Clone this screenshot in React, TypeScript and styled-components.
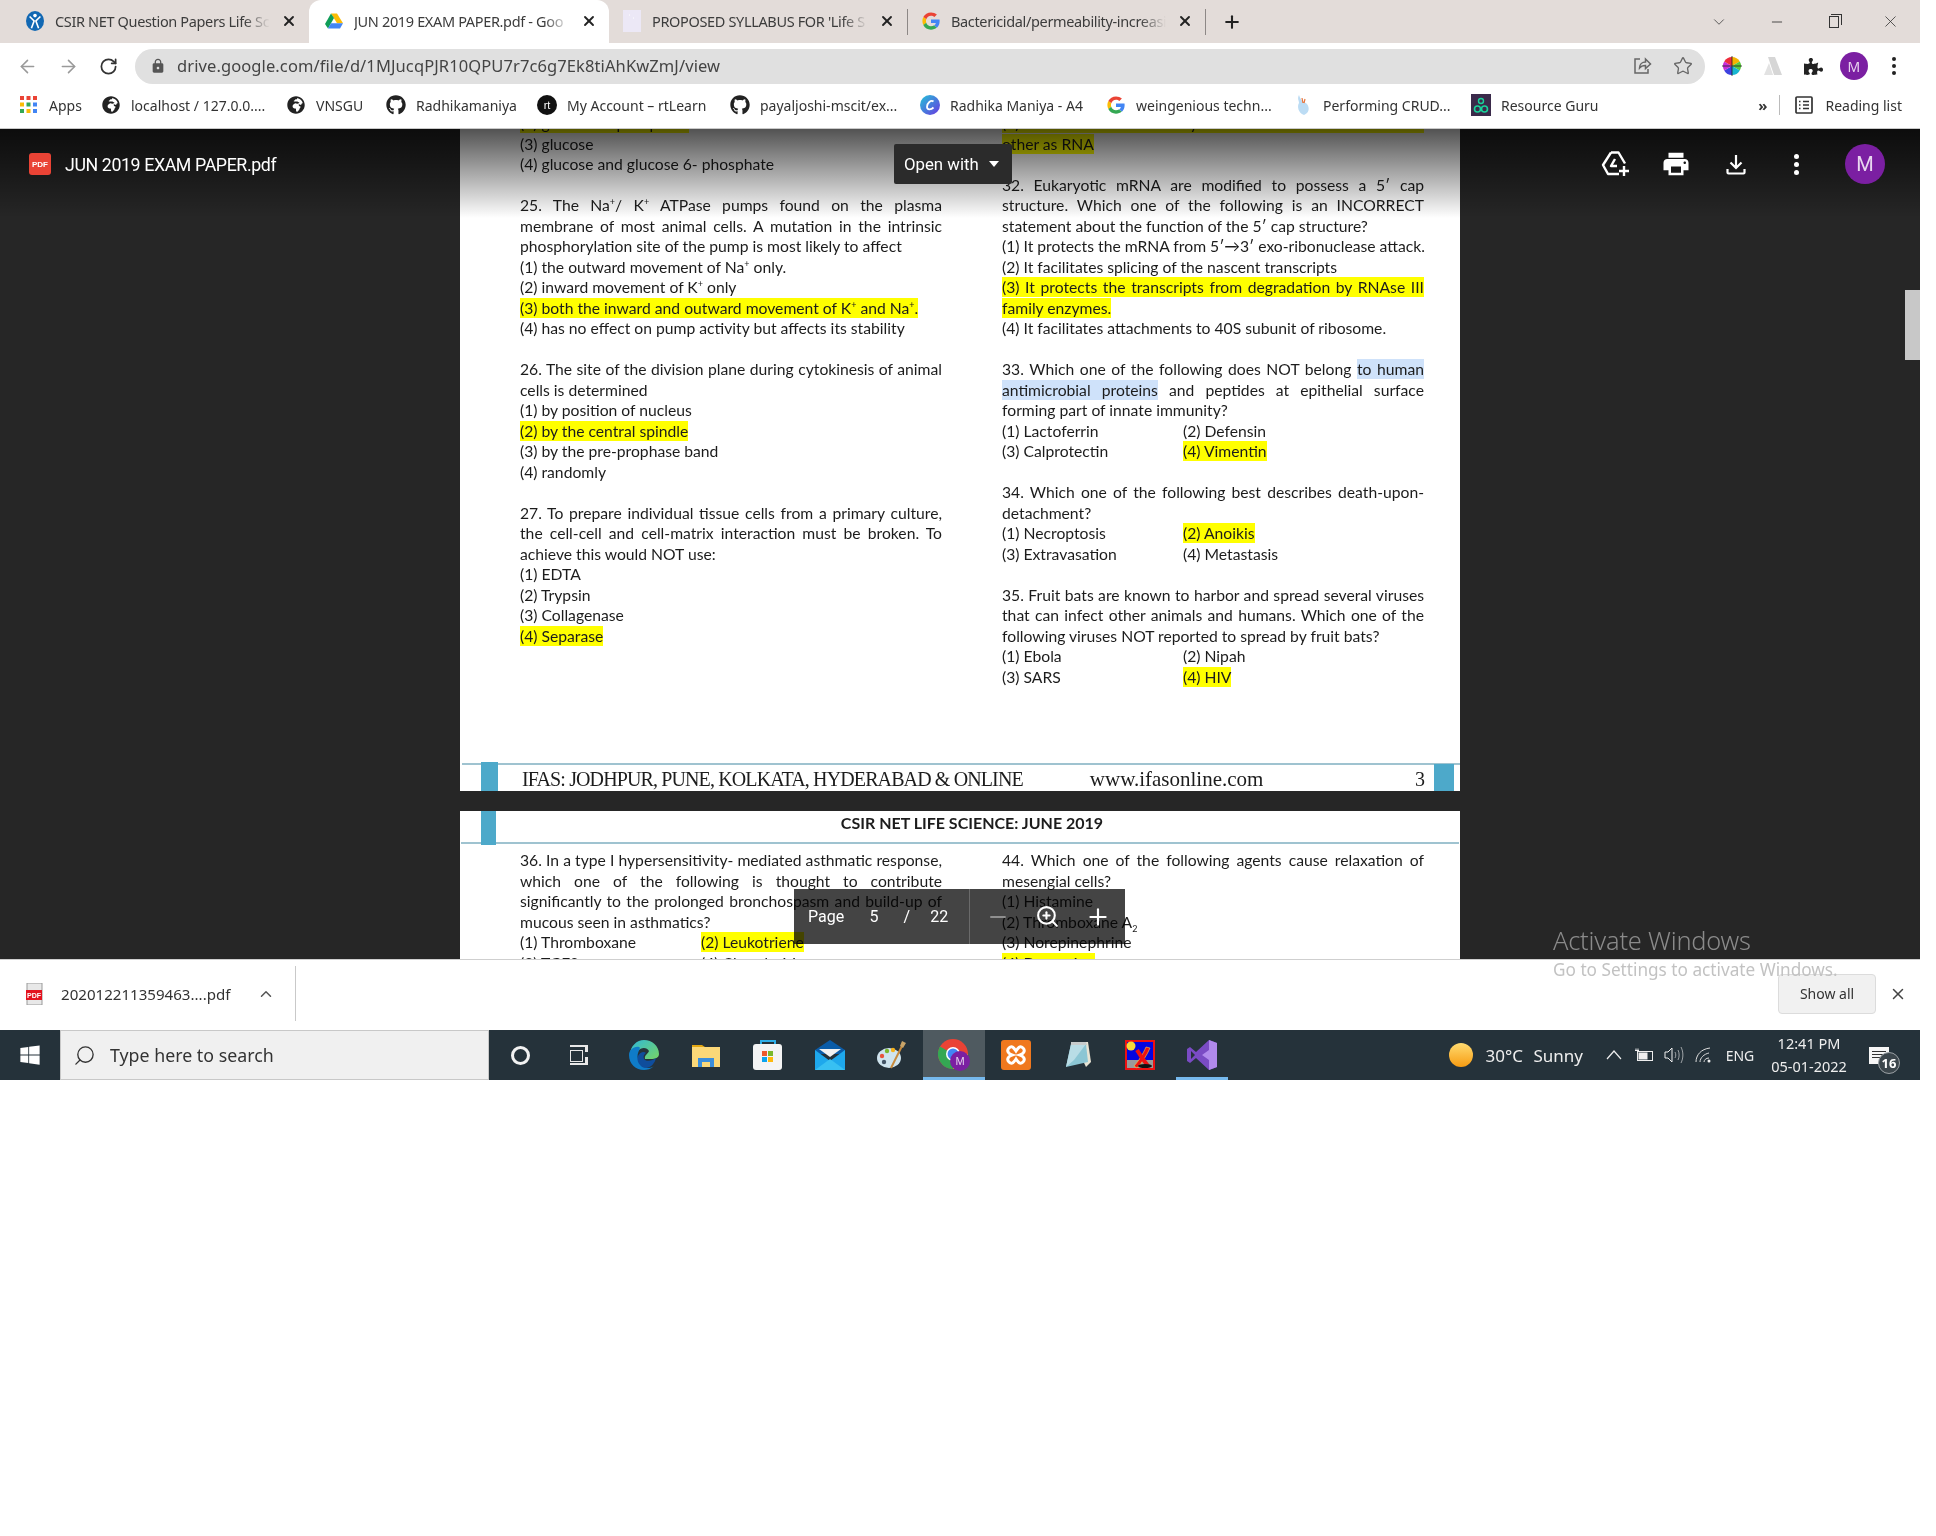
import React from 'react';
import styled, { createGlobalStyle } from 'styled-components';
import { ArrowLeft, ArrowRight, RotateCw, Star, Plus, Minus, X, ChevronDown, ChevronUp, ZoomIn, Search } from 'lucide-react';
import { FaGithub, FaGlobeAfrica, FaPuzzlePiece, FaWindows } from 'react-icons/fa';
import { MdLock, MdPrint } from 'react-icons/md';

const GlobalStyle = createGlobalStyle`
  html, body {
    margin: 0;
    padding: 0;
    background: #fff;
  }
  * {
    box-sizing: border-box;
  }
`;

const UI_FONT = `"Noto Sans", "Open Sans", sans-serif`;
const DOC_FONT = `Lato, "Liberation Sans", sans-serif`;

/* ---------- icons ---------- */

const DriveLogo = ({ size = 18 }: { size?: number }) => (
  <svg width={size} height={size} viewBox="0 0 24 22">
    <path d="M8 1h8l8 13h-8z" fill="#fbbc04" />
    <path d="M8 1 0 15l4 6 8-14z" fill="#0f9d58" />
    <path d="M4 21h16l4-7H8z" fill="#4285f4" />
  </svg>
);

const GoogleG = ({ size = 18 }: { size?: number }) => (
  <svg width={size} height={size} viewBox="0 0 48 48">
    <path fill="#ea4335" d="M24 10c3.5 0 6.6 1.2 9 3.5l6.7-6.7C35.600 3 30.200 1 24 1 15 1 7.300 6.100 3.500 13.600l7.800 6C13.200 14 18.100 10 24 10z" />
    <path fill="#4285f4" d="M47 24.500c0-1.600-.1-3.100-.4-4.500H24v9h13c-.6 3-2.300 5.500-4.800 7.200l7.500 5.800C44.100 37.900 47 31.800 47 24.500z" />
    <path fill="#fbbc05" d="M11.300 28.400c-.5-1.400-.7-2.900-.7-4.400s.3-3 .7-4.400l-7.800-6C1.900 16.800 1 20.300 1 24s.9 7.200 2.500 10.400z" />
    <path fill="#34a853" d="M24 47c6.200 0 11.400-2 15.200-5.500l-7.500-5.800c-2.100 1.400-4.700 2.200-7.700 2.200-5.900 0-10.900-4-12.700-9.400l-7.800 6C7.300 41.900 15 47 24 47z" />
  </svg>
);

const CsirFavicon = () => (
  <svg width="20" height="22" viewBox="0 0 20 22">
    <ellipse cx="10" cy="11" rx="10" ry="11" fill="#1268b3" />
    <circle cx="10" cy="5" r="2" fill="#fff" />
    <path d="M4 6l5 5-3 8M16 6l-5 5 3 8" stroke="#fff" strokeWidth="1.800" fill="none" />
  </svg>
);

const PdfTabFavicon = () => (
  <svg width="18" height="22" viewBox="0 0 18 22">
    <rect width="18" height="22" fill="#ece8f6" />
    <path d="M6 5h1M10 8h1" stroke="#fff" strokeWidth="1" />
  </svg>
);

const AppsGrid = () => (
  <svg width="18" height="18" viewBox="0 0 18 18">
    {['#ea4335', '#ea4335', '#ea4335', '#fbbc04', '#34a853', '#4285f4', '#34a853', '#fbbc04', '#4285f4'].map((c, i) => (
      <rect key={i} x={(i % 3) * 6.500} y={Math.floor(i / 3) * 6.500} width="4" height="4" fill={c} />
    ))}
  </svg>
);

const RtLearnIcon = () => (
  <svg width="20" height="20" viewBox="0 0 20 20">
    <circle cx="10" cy="10" r="10" fill="#111" />
    <text x="10" y="14" fontSize="11" fontFamily="Liberation Sans, sans-serif" fill="#fff" textAnchor="middle">rt</text>
  </svg>
);

const CanvaIcon = () => (
  <svg width="20" height="20" viewBox="0 0 20 20">
    <defs>
      <linearGradient id="canva" x1="0" y1="0" x2="1" y2="1">
        <stop offset="0" stopColor="#22c4d8" />
        <stop offset="1" stopColor="#6a36e0" />
      </linearGradient>
    </defs>
    <circle cx="10" cy="10" r="10" fill="url(#canva)" />
    <path d="M13.500 6.500C11 4.500 7 8 7 12c0 3 4 3 6.500 .5" stroke="#fff" strokeWidth="1.800" fill="none" />
  </svg>
);

const CrudIcon = () => (
  <svg width="18" height="22" viewBox="0 0 18 22">
    <path d="M5 1c-2 4 0 5 0 8-2 3-1 10 5 12 5-2 6-7 3-11-2-2-6-2-8-9z" fill="#bcdcf4" />
    <path d="M8 4l1 5M11 5l-1 4" stroke="#e8743b" strokeWidth="1.200" />
  </svg>
);

const ResourceGuruIcon = () => (
  <svg width="20" height="22" viewBox="0 0 20 22">
    <rect width="20" height="22" fill="#3a2a4a" />
    <circle cx="6.500" cy="15" r="3" stroke="#18d39a" strokeWidth="1.600" fill="none" />
    <circle cx="13.500" cy="15" r="3" stroke="#18d39a" strokeWidth="1.600" fill="none" />
    <circle cx="10" cy="7" r="2.500" stroke="#18d39a" strokeWidth="1.400" fill="none" />
  </svg>
);

const ReadingListIcon = () => (
  <svg width="18" height="18" viewBox="0 0 18 18" fill="none" stroke="#333" strokeWidth="1.700">
    <rect x="1" y="1" width="16" height="16" rx="1" />
    <path d="M4 5.500h1.500M8 5.500h6M4 9h1.500M8 9h6M4 12.500h1.500M8 12.500h6" />
  </svg>
);

const ShareIcon = () => (
  <svg width="20" height="20" viewBox="0 0 20 20" fill="none" stroke="#666" strokeWidth="1.500">
    <path d="M8 3H3v14h13v-4" />
    <path d="M7.500 12c0-4 3-6 6-6V3l5 5-5 4.500V9.500c-2.500 0-4.500 .5-6 2.500z" />
  </svg>
);

const ColorWheel = () => (
  <svg width="20" height="22" viewBox="0 0 20 20">
    <circle cx="10" cy="10" r="9" fill="#fff" />
    <path d="M10 10V1a9 9 0 0 1 7.800 4.500z" fill="#f5b400" />
    <path d="M10 10l7.800-4.500a9 9 0 0 1 0 9z" fill="#5ac83c" />
    <path d="M10 10l7.800 4.500A9 9 0 0 1 10 19z" fill="#18b6d0" />
    <path d="M10 10v9a9 9 0 0 1-7.800-4.500z" fill="#3d42e0" />
    <path d="M10 10l-7.800 4.500a9 9 0 0 1 0-9z" fill="#c82cd8" />
    <path d="M10 10L2.200 5.500A9 9 0 0 1 10 1z" fill="#ee2c3c" />
    <path d="M10 0v20M0 10h20" stroke="#222" strokeWidth=".800" />
  </svg>
);

const PeakIcon = () => (
  <svg width="22" height="22" viewBox="0 0 22 22">
    <path d="M6 2h4l6 18h-4zM10 2h3l7 18h-4z" fill="#d6d6d6" />
    <path d="M7 8l4 12H2z" fill="#e2e2e2" />
  </svg>
);

const AddToDriveGlyph = () => (
  <svg width="30" height="28" viewBox="0 0 30 28" fill="none" stroke="#fff" strokeWidth="2.400" strokeLinejoin="round">
    <path d="M10 2.500h7.500l6.500 11" />
    <path d="M10 2.500 2 15l5 9h11" />
    <path d="M14 9l-4 7h6" />
    <path d="M23 16v10M18 21h10" />
  </svg>
);

const DownloadGlyph = () => (
  <svg width="24" height="24" viewBox="0 0 24 24" fill="none" stroke="#fff" strokeWidth="2.200">
    <path d="M12 3v13M6.500 10.500 12 16l5.500-5.500" />
    <path d="M3.500 17v3.500a1 1 0 0 0 1 1h15a1 1 0 0 0 1-1V17" />
  </svg>
);

const PdfBadge = () => (
  <svg width="22" height="22" viewBox="0 0 22 22">
    <rect width="22" height="22" rx="3" fill="#ea4335" />
    <text x="11" y="14" textAnchor="middle" fontFamily="Liberation Sans, sans-serif" fontWeight="700" fontSize="8" fill="#fff">PDF</text>
  </svg>
);

const PdfFileIcon = () => (
  <svg width="18" height="22" viewBox="0 0 18 22">
    <rect x="1" y="0" width="15" height="22" fill="#e8e8e8" stroke="#9a9a9a" />
    <rect x="0" y="7" width="16" height="10" fill="#e3131f" />
    <text x="8" y="15" textAnchor="middle" fontFamily="Liberation Sans, sans-serif" fontWeight="700" fontSize="7" fill="#fff">PDF</text>
  </svg>
);

const EdgeIcon = () => (
  <svg width="32" height="30" viewBox="0 0 32 30">
    <defs>
      <linearGradient id="edgeA" x1="0" y1="0" x2="1" y2="1">
        <stop offset="0" stopColor="#2fb8d8" />
        <stop offset="1" stopColor="#7fd858" />
      </linearGradient>
    </defs>
    <path d="M2 15C2 6 9 0 16 0c8 0 15 6 15 14 0 4-4 5-8 5h-6c-1-4 3-5 4-8-2-4-8-4-11 0-3 3-2 9 1 13-5-1-9-4-9-9z" fill="url(#edgeA)" />
    <path d="M1 15c0-5 5-9 10-8 3 1-3 5-1 12 1 4 5 8 10 9 4 0 6-2 6-2-3 3-7 4-10 4C8 30 1 24 1 15z" fill="#0f7cc8" />
    <path d="M10 16c2-4 6-5 8-3-3 2-3 5-1 7 4 2 8 0 11-2-1 5-5 10-11 10-5-1-9-7-7-12z" fill="#0f4d9c" />
  </svg>
);

const FolderIcon = () => (
  <svg width="28" height="24" viewBox="0 0 28 24">
    <path d="M0 2h10l3 2h0v4H0z" fill="#e3a712" />
    <rect y="4" width="28" height="20" fill="#fbd878" />
    <path d="M6 24v-9h16v9h-4v-5h-8v5z" fill="#3b8edb" />
  </svg>
);

const StoreIcon = () => (
  <svg width="30" height="30" viewBox="0 0 30 30">
    <path d="M8 5V1h14v4" stroke="#2eaee8" strokeWidth="2" fill="none" />
    <rect y="4" width="29" height="26" rx="3" fill="#f4f4f4" />
    <rect x="9" y="11" width="5" height="5" fill="#ee5a2c" />
    <rect x="15" y="11" width="5" height="5" fill="#7ab92c" />
    <rect x="9" y="17" width="5" height="5" fill="#0ba4ee" />
    <rect x="15" y="17" width="5" height="5" fill="#feb90c" />
  </svg>
);

const MailIcon = () => (
  <svg width="30" height="30" viewBox="0 0 30 30">
    <path d="M15 0 30 10v4H0v-4z" fill="#0a5ca8" />
    <path d="M4 9h22l-11 8z" fill="#f2f2f2" />
    <path d="M0 10l15 11L30 10v20H0z" fill="#1ea8ec" />
    <path d="M0 30l15-11 15 11z" fill="#38c0f2" />
  </svg>
);

const PaintIcon = () => (
  <svg width="30" height="30" viewBox="0 0 30 30">
    <ellipse cx="12" cy="18" rx="12" ry="10" fill="#cfe4ee" />
    <circle cx="5" cy="16" r="2.200" fill="#e8543c" />
    <circle cx="10" cy="11" r="2.200" fill="#7ab92c" />
    <circle cx="16" cy="10" r="2.200" fill="#f5b21c" />
    <circle cx="7" cy="22" r="2.200" fill="#456" />
    <path d="M14 28 26 4" stroke="#c88a3c" strokeWidth="2" />
    <path d="M25 1l4 2-3 5-3-2z" fill="#c9a468" />
  </svg>
);

const ChromeBadged = () => (
  <svg width="32" height="32" viewBox="0 0 32 32">
    <circle cx="15" cy="15" r="15" fill="#ea4335" />
    <path d="M15 15 2 7.500A15 15 0 0 0 15 30z" fill="#34a853" />
    <path d="M15 15h15a15 15 0 0 1-15 15z" fill="#fbbc04" />
    <circle cx="15" cy="15" r="7" fill="#fff" />
    <circle cx="15" cy="15" r="5.500" fill="#4285f4" />
    <circle cx="22" cy="22" r="10" fill="#7b1fa2" />
    <text x="22" y="26" textAnchor="middle" fontFamily="Liberation Sans, sans-serif" fontSize="11" fill="#e6d2ee">M</text>
  </svg>
);

const XamppIcon = () => (
  <svg width="30" height="30" viewBox="0 0 30 30">
    <rect width="30" height="30" rx="3" fill="#f0781e" />
    <path d="M8 8c3-3 5 0 7 3 2-3 4-6 7-3s0 6-3 7c3 1 6 4 3 7s-5 0-7-3c-2 3-4 6-7 3s0-6 3-7c-3-1-6-4-3-7z" fill="none" stroke="#fff" strokeWidth="3" />
  </svg>
);

const NotepadIcon = () => (
  <svg width="28" height="28" viewBox="0 0 28 28">
    <path d="M10 1h14l3 20-5 5z" fill="#e8e4d4" />
    <path d="M7 3h15l2 18-22 5z" fill="#8cc6d4" />
    <path d="M7 3h15l-12 16-8 7z" fill="#b9dde6" />
    <path d="M7 1h15l1 3H7z" fill="#c8cccc" />
  </svg>
);

const FilezillaLikeIcon = () => (
  <svg width="30" height="30" viewBox="0 0 30 30">
    <rect x="1" y="1" width="28" height="28" fill="#0404e0" stroke="#ee1111" strokeWidth="2" />
    <circle cx="6" cy="6" r="4.500" fill="#f6d83c" />
    <path d="M2 20h26v8H2z" fill="#9a9a9a" />
    <path d="M9 26c4-4 9-12 12-19l4 1c-3 7-8 15-13 20z" fill="#ee1111" stroke="#f6d83c" strokeWidth=".600" />
    <path d="M12 10c3 5 7 11 11 16" stroke="#ee1111" strokeWidth="4" fill="none" />
    <ellipse cx="20" cy="26" rx="7" ry="2" fill="#111" />
  </svg>
);

const VsIcon = () => (
  <svg width="30" height="30" viewBox="0 0 30 30">
    <path d="M22 0l8 3v24l-8 3-13-12-6 5-3-2V9l3-2 6 5z" fill="#7a4bc4" />
    <path d="M22 0l8 3v24l-8 3V20l-7-5 7-5z" fill="#b18aec" />
    <path d="M4 11v8l4-4z" fill="#25323a" />
  </svg>
);

const SunIcon = () => (
  <svg width="24" height="24" viewBox="0 0 24 24">
    <defs>
      <linearGradient id="sun" x1="0" y1="0" x2="0" y2="1">
        <stop offset="0" stopColor="#ffdb70" />
        <stop offset="1" stopColor="#f79c12" />
      </linearGradient>
    </defs>
    <circle cx="12" cy="12" r="12" fill="url(#sun)" />
  </svg>
);

const CaretIcon = () => (
  <svg width="16" height="10" viewBox="0 0 16 10" fill="none" stroke="#eee" strokeWidth="1.200">
    <path d="M1 9l7-8 7 8" />
  </svg>
);

const BatteryIcon = () => (
  <svg width="20" height="14" viewBox="0 0 20 14" fill="none" stroke="#eee">
    <rect x="3.500" y="3.500" width="15" height="9" />
    <rect x="5" y="5" width="8" height="6" fill="#eee" />
    <path d="M1 2.500h4M2 .5v2M4 .5v2" />
  </svg>
);

const SpeakerIcon = () => (
  <svg width="20" height="18" viewBox="0 0 20 18" fill="none" stroke="#eee">
    <path d="M1 6h3l4-4v14l-4-4H1z" />
    <path d="M11 6c1 2 1 4 0 6M14 4c1.500 3 1.500 7 0 10M17 1c2.500 5 2.500 11 0 16" strokeOpacity=".6" />
  </svg>
);

const WifiIcon = () => (
  <svg width="18" height="16" viewBox="0 0 18 16" fill="none" stroke="#ddd">
    <path d="M1 15C1 8 6 2 15 1M5 15c0-4 4-8 9-9M9 15c0-2 2-4 5-4" />
    <circle cx="14" cy="14" r="1.500" fill="#eee" stroke="none" />
  </svg>
);

/* ---------- chrome tab strip ---------- */

const Screen = styled.div`
  position: relative;
  width: 1920px;
  height: 1080px;
  display: flex;
  flex-direction: column;
  overflow: hidden;
  font-family: ${UI_FONT};
`;

const TabStrip = styled.div`
  height: 43px;
  flex: none;
  display: flex;
  align-items: stretch;
  background: #e3dcd9;
`;

const Tab = styled.div<{ $w: number; $pad: number; $active?: boolean; $sep?: boolean }>`
  position: relative;
  width: ${p => p.$w}px;
  flex: none;
  display: flex;
  align-items: center;
  gap: 11px;
  padding: 0 12px 2px ${p => p.$pad}px;
  color: #3c3c3c;
  background: ${p => (p.$active ? '#fff' : 'transparent')};
  border-radius: ${p => (p.$active ? '12px 12px 0 0' : '0')};
  &::after {
    content: '';
    display: ${p => (p.$sep ? 'block' : 'none')};
    position: absolute;
    right: -1px;
    top: 9px;
    bottom: 8px;
    width: 1px;
    background: #8d8886;
  }
`;

const TabTitle = styled.span`
  flex: 1;
  min-width: 0;
  white-space: nowrap;
  overflow: hidden;
  font-size: 14.5px;
  letter-spacing: -0.35px;
  -webkit-mask-image: linear-gradient(90deg, #000 88%, transparent 100%);
  mask-image: linear-gradient(90deg, #000 88%, transparent 100%);
`;

const TabClose = styled(X).attrs({ size: 16, strokeWidth: 2.8 })`
  flex: none;
  color: #222;
`;

const FaviconSlot = styled.span`
  width: 18px;
  height: 22px;
  flex: none;
  display: flex;
  align-items: center;
  justify-content: center;
`;

const NewTab = styled.span`
  display: flex;
  align-items: center;
  justify-content: center;
  width: 54px;
  color: #222;
`;

const WindowControls = styled.div`
  margin-left: auto;
  display: flex;
  align-items: center;
  color: #333;
  padding-right: 1px;
`;

const WindowButton = styled.span<{ $w: number }>`
  width: ${p => p.$w}px;
  height: 36px;
  display: flex;
  align-items: center;
  justify-content: center;
`;

const RestoreGlyph = styled.span`
  position: relative;
  width: 10px;
  height: 12px;
  border: 1px solid #333;
  &::before {
    content: '';
    position: absolute;
    top: -3px;
    left: 1px;
    width: 10px;
    height: 10px;
    border-top: 1px solid #333;
    border-right: 1px solid #333;
  }
`;

/* ---------- address bar ---------- */

const Toolbar = styled.div`
  height: 41px;
  flex: none;
  display: flex;
  align-items: center;
  background: #fff;
  padding-top: 5px;
`;

const NavButton = styled.span<{ $w: number; $muted?: boolean }>`
  width: ${p => p.$w}px;
  flex: none;
  display: flex;
  justify-content: center;
  color: ${p => (p.$muted ? '#9a9a9a' : '#333')};
`;

const Omnibox = styled.div`
  width: 1570px;
  height: 35px;
  margin-left: 1px;
  flex: none;
  display: flex;
  align-items: center;
  border-radius: 18px;
  background: #e0e0e0;
  padding-left: 15px;
  color: #555;
`;

const UrlText = styled.span`
  margin: -2px 0 0 11px;
  font-size: 16.5px;
  color: #444;
  white-space: nowrap;
  letter-spacing: 0.1px;
`;

const OmniActions = styled.div`
  margin-left: auto;
  display: flex;
  align-items: center;
  gap: 21px;
  padding-right: 12px;
  color: #666;
`;

const ExtensionRow = styled.div`
  display: flex;
  align-items: center;
  margin-left: 7px;
`;

const ExtensionSlot = styled.span`
  width: 40.500px;
  display: flex;
  justify-content: center;
  color: #222;
`;

const ToolbarAvatar = styled.span`
  width: 28px;
  height: 28px;
  border-radius: 50%;
  background: #7b1fa2;
  color: #e6d2ee;
  font-size: 14px;
  display: flex;
  align-items: center;
  justify-content: center;
`;

const VerticalDots = styled.span<{ $size: number; $color: string; $gap: number }>`
  display: flex;
  flex-direction: column;
  gap: ${p => p.$gap}px;
  i {
    display: block;
    width: ${p => p.$size}px;
    height: ${p => p.$size}px;
    border-radius: 50%;
    background: ${p => p.$color};
  }
`;

/* ---------- bookmarks ---------- */

const BookmarkBar = styled.div`
  height: 45px;
  flex: none;
  display: flex;
  align-items: center;
  background: #fff;
  border-bottom: 1px solid #c9c9c9;
  padding: 0 0 2px 19px;
  font-size: 14px;
  color: #333;
`;

const Bookmark = styled.span<{ $w: number }>`
  width: ${p => p.$w}px;
  flex: none;
  display: flex;
  align-items: center;
  gap: 10px;
  white-space: nowrap;
`;

const BookmarkIcon = styled.span`
  width: 20px;
  height: 22px;
  flex: none;
  display: flex;
  align-items: center;
  justify-content: center;
  color: #222;
`;

const BookmarkTail = styled.div`
  margin-left: auto;
  display: flex;
  align-items: center;
  padding-right: 18px;
`;

const OverflowMark = styled.span`
  font-size: 15px;
  font-weight: 700;
  margin-right: 12px;
`;

const TailDivider = styled.span`
  width: 1px;
  height: 20px;
  background: #bbb;
  margin-right: 15px;
`;

const ReadingLabel = styled.span`
  margin-left: 12px;
`;

/* ---------- pdf viewer ---------- */

const Viewer = styled.div`
  position: relative;
  flex: 1;
  min-height: 0;
  overflow: hidden;
  background: #262626;
  display: flex;
  justify-content: center;
`;

const PageStack = styled.div`
  width: 1000px;
  margin-top: -16px;
  display: flex;
  flex-direction: column;
  gap: 20px;
`;

const PageSheet = styled.section<{ $h?: number }>`
  position: relative;
  flex: none;
  height: ${p => (p.$h ? `${p.$h}px` : 'auto')};
  background: #fff;
  display: flex;
  flex-direction: column;
  overflow: hidden;
  font-family: ${DOC_FONT};
`;

const Columns = styled.div`
  display: grid;
  grid-template-columns: 422px 422px;
  column-gap: 60px;
  padding-left: 60px;
`;

const DocColumn = styled.div`
  display: flex;
  flex-direction: column;
`;

const Line = styled.div<{ $justify?: boolean; $gapBefore?: boolean }>`
  height: 20.500px;
  line-height: 20.500px;
  font-size: 15.700px;
  color: #1c1c1c;
  white-space: ${p => (p.$justify ? 'normal' : 'nowrap')};
  text-align: ${p => (p.$justify ? 'justify' : 'left')};
  text-align-last: ${p => (p.$justify ? 'justify' : 'left')};
  margin-top: ${p => (p.$gapBefore ? '20.500px' : '0')};
`;

const OptionRow = styled(Line)`
  display: grid;
  grid-template-columns: 181px 1fr;
`;

const Mark = styled.span`
  background: #ffff00;
  padding: 1px 0;
`;

const Selected = styled.span`
  background: #cfe2fa;
  padding: 1px 0;
`;

const Sup = styled.sup`
  font-size: 9px;
  line-height: 0;
`;

const Sub = styled.sub`
  font-size: 9px;
  line-height: 0;
`;

const PageFooter = styled.footer`
  position: relative;
  margin-top: auto;
  height: 28px;
  border-top: 2px solid #9fc3d0;
  padding: 2px 36px 0 60px;
  margin-left: 2px;
  display: flex;
  align-items: center;
  font-family: "Liberation Serif", serif;
  font-size: 20px;
  letter-spacing: -0.88px;
  color: #1c1c1c;
  white-space: nowrap;
`;

const FooterSite = styled.span`
  margin-left: 67px;
  font-size: 21px;
  letter-spacing: 0;
`;

const FooterPageNo = styled.span`
  margin-left: auto;
`;

const BlueTab = styled.span<{ $side: 'left' | 'right'; $top: number; $h: number; $w: number; $inset: number }>`
  position: absolute;
  top: ${p => p.$top}px;
  ${p => p.$side}: ${p => p.$inset}px;
  width: ${p => p.$w}px;
  height: ${p => p.$h}px;
  background: #4da9ca;
`;

const PageHeader = styled.header`
  position: relative;
  height: 33px;
  flex: none;
  border-bottom: 2px solid #9fc3d0;
  margin: 0 1px 6px;
  padding: 0 0 8px 24px;
  display: flex;
  align-items: center;
  justify-content: center;
  font-size: 16px;
  font-weight: 700;
  color: #1c1c1c;
`;

const TopShade = styled.div`
  position: absolute;
  left: 0;
  right: 0;
  top: 0;
  height: 89px;
  background: linear-gradient(rgba(0, 0, 0, 0.68), rgba(0, 0, 0, 0));
  pointer-events: none;
`;

const ViewerBar = styled.div`
  position: absolute;
  left: 0;
  right: 0;
  top: 0;
  height: 72px;
  display: flex;
  align-items: center;
  padding: 0 35px 2px 29px;
  color: #fff;
`;

const DocTitle = styled.span`
  margin-left: 14px;
  font-size: 17.8px;
  letter-spacing: -0.4px;
  font-family: Roboto, sans-serif;
`;

const OpenWith = styled.span`
  position: absolute;
  left: 894px;
  top: 15px;
  width: 118px;
  height: 40px;
  background: #2b2b2b;
  border-radius: 2px;
  display: flex;
  align-items: center;
  gap: 10px;
  padding-left: 10px;
  font-size: 16.800px;
  font-family: Roboto, sans-serif;
  white-space: nowrap;
`;

const DownTriangle = styled.i`
  width: 0;
  height: 0;
  border-left: 5.500px solid transparent;
  border-right: 5.500px solid transparent;
  border-top: 6px solid #fff;
`;

const ViewerActions = styled.div`
  margin-left: auto;
  display: flex;
  align-items: center;
`;

const ViewerAction = styled.span`
  width: 60px;
  display: flex;
  justify-content: center;
`;

const ViewerAvatar = styled.span`
  width: 40px;
  height: 40px;
  margin-left: 19px;
  border-radius: 50%;
  background: #7b1fa2;
  color: #e9d8f0;
  font-size: 20px;
  font-family: Roboto, sans-serif;
  display: flex;
  align-items: center;
  justify-content: center;
`;

const ScrollThumb = styled.span`
  position: absolute;
  right: 0;
  top: 161px;
  width: 15px;
  height: 70px;
  background: #c8c8c8;
`;

const PageControl = styled.div`
  position: absolute;
  left: 794px;
  top: 760px;
  width: 331px;
  height: 55px;
  border-radius: 2px;
  display: flex;
  align-items: center;
  color: #fff;
  font-family: Roboto, sans-serif;
  font-size: 16px;
  &::before {
    content: '';
    position: absolute;
    inset: 0;
    background: #444;
    mix-blend-mode: multiply;
  }
`;

const PageCounter = styled.div`
  position: relative;
  width: 176px;
  height: 100%;
  display: flex;
  align-items: center;
  padding-left: 14px;
  border-right: 1px solid #6a6a6a;
`;

const CounterValue = styled.span<{ $w: number }>`
  width: ${p => p.$w}px;
  text-align: center;
`;

const ZoomTools = styled.div`
  position: relative;
  flex: 1;
  display: flex;
  align-items: center;
  justify-content: space-between;
  padding: 0 14px 0 16px;
`;

/* ---------- download shelf ---------- */

const DownloadShelf = styled.div`
  height: 71px;
  flex: none;
  display: flex;
  align-items: center;
  background: #fff;
  border-top: 1px solid #cfcfcf;
  padding: 0 0 3px 26px;
  font-size: 15.100px;
  color: #333;
`;

const ShelfItem = styled.div`
  width: 270px;
  height: 55px;
  display: flex;
  align-items: center;
  gap: 17px;
  padding-right: 20px;
  border-right: 1px solid #c9c9c9;
`;

const ShelfCaret = styled(ChevronUp).attrs({ size: 18 })`
  margin-left: auto;
  color: #555;
`;

const ShowAll = styled.span`
  margin-left: auto;
  width: 98px;
  height: 40px;
  display: flex;
  align-items: center;
  justify-content: center;
  background: #f1f1f1;
  border: 1px solid #dcdcdc;
  border-radius: 4px;
  font-size: 14px;
`;

const ShelfClose = styled.span`
  width: 44px;
  display: flex;
  justify-content: center;
  color: #444;
`;

/* ---------- windows taskbar ---------- */

const Taskbar = styled.div`
  height: 50px;
  flex: none;
  display: flex;
  align-items: stretch;
  background: #25323a;
  color: #eee;
`;

const StartButton = styled.span`
  width: 60px;
  display: flex;
  align-items: center;
  justify-content: center;
  color: #fff;
`;

const SearchBox = styled.div`
  width: 429px;
  display: flex;
  align-items: center;
  gap: 14px;
  padding-left: 12px;
  background: #f0f0f0;
  border: 1px solid #c8c8c8;
  color: #333;
  font-size: 17.800px;
`;

const MirroredSearch = styled(Search).attrs({ size: 23, strokeWidth: 1.4 })`
  transform: scaleX(-1);
`;

const TaskSlot = styled.span<{ $active?: boolean; $open?: boolean }>`
  position: relative;
  width: 62px;
  display: flex;
  align-items: center;
  justify-content: center;
  background: ${p => (p.$active ? '#4f5a60' : 'transparent')};
  &::after {
    content: '';
    display: ${p => (p.$open || p.$active ? 'block' : 'none')};
    position: absolute;
    left: ${p => (p.$active ? 0 : 5)}px;
    right: ${p => (p.$active ? 0 : 5)}px;
    bottom: 0;
    height: 3px;
    background: #76b9ed;
  }
`;

const CortanaRing = styled.i`
  width: 19px;
  height: 19px;
  border-radius: 50%;
  border: 3px solid #f2f2f2;
`;

const TaskViewGlyph = styled.i`
  position: relative;
  width: 18px;
  height: 20px;
  margin-right: 6px;
  border-top: 2px solid #e8e8e8;
  border-bottom: 2px solid #e8e8e8;
  &::before {
    content: '';
    position: absolute;
    left: 0;
    top: 3px;
    width: 11px;
    height: 10px;
    border: 1px solid #e8e8e8;
  }
  &::after {
    content: '';
    position: absolute;
    right: 0;
    top: 0;
    width: 3px;
    height: 16px;
    background: linear-gradient(#e8e8e8 30%, transparent 30% 60%, #e8e8e8 60%);
  }
`;

const Tray = styled.div`
  margin-left: auto;
  display: flex;
  align-items: center;
  padding-right: 31px;
`;

const WeatherText = styled.span`
  margin-left: 13px;
  font-size: 17px;
  word-spacing: 6px;
  white-space: nowrap;
  margin-right: 17px;
`;

const TraySlot = styled.span<{ $w: number }>`
  width: ${p => p.$w}px;
  display: flex;
  justify-content: center;
`;

const LangLabel = styled.span`
  font-size: 14px;
  width: 40px;
  text-align: center;
`;

const Clock = styled.span`
  width: 92px;
  font-size: 14.500px;
  line-height: 23px;
  text-align: center;
  margin-left: 3px;
`;

const Notification = styled.span`
  position: relative;
  margin-left: 14px;
  width: 20px;
  height: 17px;
  background: #f6f6f6;
  display: flex;
  flex-direction: column;
  gap: 2px;
  padding: 4px 3px;
  i {
    height: 1px;
    background: #333;
  }
`;

const NotificationCount = styled.span`
  position: absolute;
  right: -11px;
  bottom: -10px;
  width: 22px;
  height: 22px;
  border-radius: 50%;
  background: #3c464c;
  border: 1px solid #9aa0a4;
  color: #fff;
  font-size: 13px;
  font-weight: 700;
  display: flex;
  align-items: center;
  justify-content: center;
`;

const Watermark = styled.div`
  position: absolute;
  left: 1553px;
  top: 922px;
  pointer-events: none;
  white-space: nowrap;
`;

const WatermarkTitle = styled.div`
  font-size: 25.400px;
  line-height: 36px;
  color: #8a8a8a;
  font-weight: 300;
  font-family: "Noto Sans", sans-serif;
  letter-spacing: -0.2px;
`;

const WatermarkNote = styled.div`
  font-size: 17.200px;
  line-height: 24px;
  color: #c2c2c2;
`;

/* ---------- data ---------- */

const bookmarks: { w: number; icon: React.ReactNode; label: string }[] = [
  { w: 82, icon: <AppsGrid />, label: 'Apps' },
  { w: 185, icon: <FaGlobeAfrica size={18} />, label: 'localhost / 127.0.0....' },
  { w: 100, icon: <FaGlobeAfrica size={18} />, label: 'VNSGU' },
  { w: 151, icon: <FaGithub size={20} />, label: 'Radhikamaniya' },
  { w: 193, icon: <RtLearnIcon />, label: 'My Account – rtLearn' },
  { w: 190, icon: <FaGithub size={20} />, label: 'payaljoshi-mscit/ex...' },
  { w: 186, icon: <CanvaIcon />, label: 'Radhika Maniya - A4' },
  { w: 187, icon: <GoogleG size={18} />, label: 'weingenious techn...' },
  { w: 178, icon: <CrudIcon />, label: 'Performing CRUD...' },
  { w: 130, icon: <ResourceGuruIcon />, label: 'Resource Guru' },
];

const App: React.FC = () => {
  return (
    <>
      <GlobalStyle />
      <Screen>
        <TabStrip>
          <Tab $w={309} $pad={26}>
            <FaviconSlot><CsirFavicon /></FaviconSlot>
            <TabTitle>CSIR NET Question Papers Life Sc</TabTitle>
            <TabClose />
          </Tab>
          <Tab $w={300} $pad={16} $active>
            <FaviconSlot><DriveLogo /></FaviconSlot>
            <TabTitle>JUN 2019 EXAM PAPER.pdf - Goo</TabTitle>
            <TabClose />
          </Tab>
          <Tab $w={298} $pad={14} $sep>
            <FaviconSlot><PdfTabFavicon /></FaviconSlot>
            <TabTitle>PROPOSED SYLLABUS FOR 'Life S</TabTitle>
            <TabClose />
          </Tab>
          <Tab $w={298} $pad={15} $sep>
            <FaviconSlot><GoogleG /></FaviconSlot>
            <TabTitle>Bactericidal/permeability-increasi</TabTitle>
            <TabClose />
          </Tab>
          <NewTab><Plus size={20} strokeWidth={2.5} /></NewTab>
          <WindowControls>
            <WindowButton $w={56}><ChevronDown size={18} strokeWidth={1} /></WindowButton>
            <WindowButton $w={60}><Minus size={16} strokeWidth={1.3} /></WindowButton>
            <WindowButton $w={54}><RestoreGlyph /></WindowButton>
            <WindowButton $w={58}><X size={19} strokeWidth={1} /></WindowButton>
          </WindowControls>
        </TabStrip>

        <Toolbar>
          <NavButton $w={54} $muted><ArrowLeft size={21} strokeWidth={1.8} /></NavButton>
          <NavButton $w={28} $muted><ArrowRight size={21} strokeWidth={1.8} /></NavButton>
          <NavButton $w={52}><RotateCw size={19} strokeWidth={2.2} /></NavButton>
          <Omnibox>
            <MdLock size={16} />
            <UrlText>drive.google.com/file/d/1MJucqPJR10QPU7r7c6g7Ek8tiAhKwZmJ/view</UrlText>
            <OmniActions>
              <ShareIcon />
              <Star size={20} strokeWidth={1.6} />
            </OmniActions>
          </Omnibox>
          <ExtensionRow>
            <ExtensionSlot><ColorWheel /></ExtensionSlot>
            <ExtensionSlot><PeakIcon /></ExtensionSlot>
            <ExtensionSlot><FaPuzzlePiece size={19} /></ExtensionSlot>
            <ExtensionSlot><ToolbarAvatar>M</ToolbarAvatar></ExtensionSlot>
            <ExtensionSlot>
              <VerticalDots $size={4} $color="#222" $gap={3}><i /><i /><i /></VerticalDots>
            </ExtensionSlot>
          </ExtensionRow>
        </Toolbar>

        <BookmarkBar>
          {bookmarks.map(b => (
            <Bookmark key={b.label} $w={b.w}>
              <BookmarkIcon>{b.icon}</BookmarkIcon>
              {b.label}
            </Bookmark>
          ))}
          <BookmarkTail>
            <OverflowMark>»</OverflowMark>
            <TailDivider />
            <ReadingListIcon />
            <ReadingLabel>Reading list</ReadingLabel>
          </BookmarkTail>
        </BookmarkBar>

        <Viewer>
          <PageStack>
            <PageSheet $h={678}>
              <Columns>
                <DocColumn>
                  <Line><Mark>(2) glucose 6- phosphate</Mark></Line>
                  <Line>(3) glucose</Line>
                  <Line>(4) glucose and glucose 6- phosphate</Line>
                  <Line $gapBefore $justify>25. The Na<Sup>+</Sup>/ K<Sup>+</Sup> ATPase pumps found on the plasma</Line>
                  <Line $justify>membrane of most animal cells. A mutation in the intrinsic</Line>
                  <Line>phosphorylation site of the pump is most likely to affect</Line>
                  <Line>(1) the outward movement of Na<Sup>+</Sup> only.</Line>
                  <Line>(2) inward movement of K<Sup>+</Sup> only</Line>
                  <Line><Mark>(3) both the inward and outward movement of K<Sup>+</Sup> and Na<Sup>+</Sup>.</Mark></Line>
                  <Line>(4) has no effect on pump activity but affects its stability</Line>
                  <Line $gapBefore $justify>26. The site of the division plane during cytokinesis of animal</Line>
                  <Line>cells is determined</Line>
                  <Line>(1) by position of nucleus</Line>
                  <Line><Mark>(2) by the central spindle</Mark></Line>
                  <Line>(3) by the pre-prophase band</Line>
                  <Line>(4) randomly</Line>
                  <Line $gapBefore $justify>27. To prepare individual tissue cells from a primary culture,</Line>
                  <Line $justify>the cell-cell and cell-matrix interaction must be broken. To</Line>
                  <Line>achieve this would NOT use:</Line>
                  <Line>(1) EDTA</Line>
                  <Line>(2) Trypsin</Line>
                  <Line>(3) Collagenase</Line>
                  <Line><Mark>(4) Separase</Mark></Line>
                </DocColumn>
                <DocColumn>
                  <Line $justify><Mark>(2) Two strands are synthesized as DNA and the</Mark></Line>
                  <Line><Mark>other as RNA</Mark></Line>
                  <Line $gapBefore $justify>32. Eukaryotic mRNA are modified to possess a 5′ cap</Line>
                  <Line $justify>structure. Which one of the following is an INCORRECT</Line>
                  <Line>statement about the function of the 5′ cap structure?</Line>
                  <Line>(1) It protects the mRNA from 5′→3′ exo-ribonuclease attack.</Line>
                  <Line>(2) It facilitates splicing of the nascent transcripts</Line>
                  <Line $justify><Mark>(3) It protects the transcripts from degradation by RNAse III</Mark></Line>
                  <Line><Mark>family enzymes.</Mark></Line>
                  <Line>(4) It facilitates attachments to 40S subunit of ribosome.</Line>
                  <Line $gapBefore $justify>33. Which one of the following does NOT belong <Selected>to human</Selected></Line>
                  <Line $justify><Selected>antimicrobial proteins</Selected> and peptides at epithelial surface</Line>
                  <Line>forming part of innate immunity?</Line>
                  <OptionRow><span>(1) Lactoferrin</span><span>(2) Defensin</span></OptionRow>
                  <OptionRow><span>(3) Calprotectin</span><span><Mark>(4) Vimentin</Mark></span></OptionRow>
                  <Line $gapBefore $justify>34. Which one of the following best describes death-upon-</Line>
                  <Line>detachment?</Line>
                  <OptionRow><span>(1) Necroptosis</span><span><Mark>(2) Anoikis</Mark></span></OptionRow>
                  <OptionRow><span>(3) Extravasation</span><span>(4) Metastasis</span></OptionRow>
                  <Line $gapBefore $justify>35. Fruit bats are known to harbor and spread several viruses</Line>
                  <Line $justify>that can infect other animals and humans. Which one of the</Line>
                  <Line>following viruses NOT reported to spread by fruit bats?</Line>
                  <OptionRow><span>(1) Ebola</span><span>(2) Nipah</span></OptionRow>
                  <OptionRow><span>(3) SARS</span><span><Mark>(4) HIV</Mark></span></OptionRow>
                </DocColumn>
              </Columns>
              <PageFooter>
                <BlueTab $side="left" $top={-3} $w={17} $h={32} $inset={19} />
                <BlueTab $side="right" $top={-1} $w={20} $h={30} $inset={6} />
                IFAS: JODHPUR, PUNE, KOLKATA, HYDERABAD &amp; ONLINE
                <FooterSite>www.ifasonline.com</FooterSite>
                <FooterPageNo>3</FooterPageNo>
              </PageFooter>
            </PageSheet>
            <PageSheet>
              <PageHeader>
                <BlueTab $side="left" $top={0} $w={15} $h={34} $inset={20} />
                CSIR NET LIFE SCIENCE: JUNE 2019
              </PageHeader>
              <Columns>
                <DocColumn>
                  <Line $justify>36. In a type I hypersensitivity- mediated asthmatic response,</Line>
                  <Line $justify>which one of the following is thought to contribute</Line>
                  <Line $justify>significantly to the prolonged bronchospasm and build-up of</Line>
                  <Line>mucous seen in asthmatics?</Line>
                  <OptionRow><span>(1) Thromboxane</span><span><Mark>(2) Leukotriene</Mark></span></OptionRow>
                  <OptionRow><span>(3) TGFβ</span><span>(4) Chondroitin</span></OptionRow>
                </DocColumn>
                <DocColumn>
                  <Line $justify>44. Which one of the following agents cause relaxation of</Line>
                  <Line>mesengial cells?</Line>
                  <Line>(1) Histamine</Line>
                  <Line>(2) Thromboxane A<Sub>2</Sub></Line>
                  <Line>(3) Norepinephrine</Line>
                  <Line><Mark>(4) Dopamine</Mark></Line>
                </DocColumn>
              </Columns>
            </PageSheet>
          </PageStack>

          <TopShade />
          <ViewerBar>
            <PdfBadge />
            <DocTitle>JUN 2019 EXAM PAPER.pdf</DocTitle>
            <OpenWith>Open with <DownTriangle /></OpenWith>
            <ViewerActions>
              <ViewerAction><AddToDriveGlyph /></ViewerAction>
              <ViewerAction><MdPrint size={30} /></ViewerAction>
              <ViewerAction><DownloadGlyph /></ViewerAction>
              <ViewerAction>
                <VerticalDots $size={5} $color="#fff" $gap={3}><i /><i /><i /></VerticalDots>
              </ViewerAction>
              <ViewerAvatar>M</ViewerAvatar>
            </ViewerActions>
          </ViewerBar>
          <ScrollThumb />

          <PageControl>
            <PageCounter>
              Page
              <CounterValue $w={60}>5</CounterValue>
              <CounterValue $w={6}>/</CounterValue>
              <CounterValue $w={60}>22</CounterValue>
            </PageCounter>
            <ZoomTools>
              <Minus size={24} color="#8f8f8f" />
              <ZoomIn size={25} />
              <Plus size={26} />
            </ZoomTools>
          </PageControl>
        </Viewer>

        <DownloadShelf>
          <ShelfItem>
            <PdfFileIcon />
            202012211359463....pdf
            <ShelfCaret />
          </ShelfItem>
          <ShowAll>Show all</ShowAll>
          <ShelfClose><X size={18} /></ShelfClose>
        </DownloadShelf>

        <Taskbar>
          <StartButton><FaWindows size={22} /></StartButton>
          <SearchBox>
            <MirroredSearch />
            Type here to search
          </SearchBox>
          <TaskSlot><CortanaRing /></TaskSlot>
          <TaskSlot><TaskViewGlyph /></TaskSlot>
          <TaskSlot><EdgeIcon /></TaskSlot>
          <TaskSlot><FolderIcon /></TaskSlot>
          <TaskSlot><StoreIcon /></TaskSlot>
          <TaskSlot><MailIcon /></TaskSlot>
          <TaskSlot><PaintIcon /></TaskSlot>
          <TaskSlot $active><ChromeBadged /></TaskSlot>
          <TaskSlot><XamppIcon /></TaskSlot>
          <TaskSlot><NotepadIcon /></TaskSlot>
          <TaskSlot><FilezillaLikeIcon /></TaskSlot>
          <TaskSlot $open><VsIcon /></TaskSlot>
          <Tray>
            <SunIcon />
            <WeatherText>30°C Sunny</WeatherText>
            <TraySlot $w={28}><CaretIcon /></TraySlot>
            <TraySlot $w={32}><BatteryIcon /></TraySlot>
            <TraySlot $w={28}><SpeakerIcon /></TraySlot>
            <TraySlot $w={32}><WifiIcon /></TraySlot>
            <LangLabel>ENG</LangLabel>
            <Clock>12:41 PM<br />05-01-2022</Clock>
            <Notification>
              <i /><i /><i />
              <NotificationCount>16</NotificationCount>
            </Notification>
          </Tray>
        </Taskbar>

        <Watermark>
          <WatermarkTitle>Activate Windows</WatermarkTitle>
          <WatermarkNote>Go to Settings to activate Windows.</WatermarkNote>
        </Watermark>
      </Screen>
    </>
  );
};

export default App;
